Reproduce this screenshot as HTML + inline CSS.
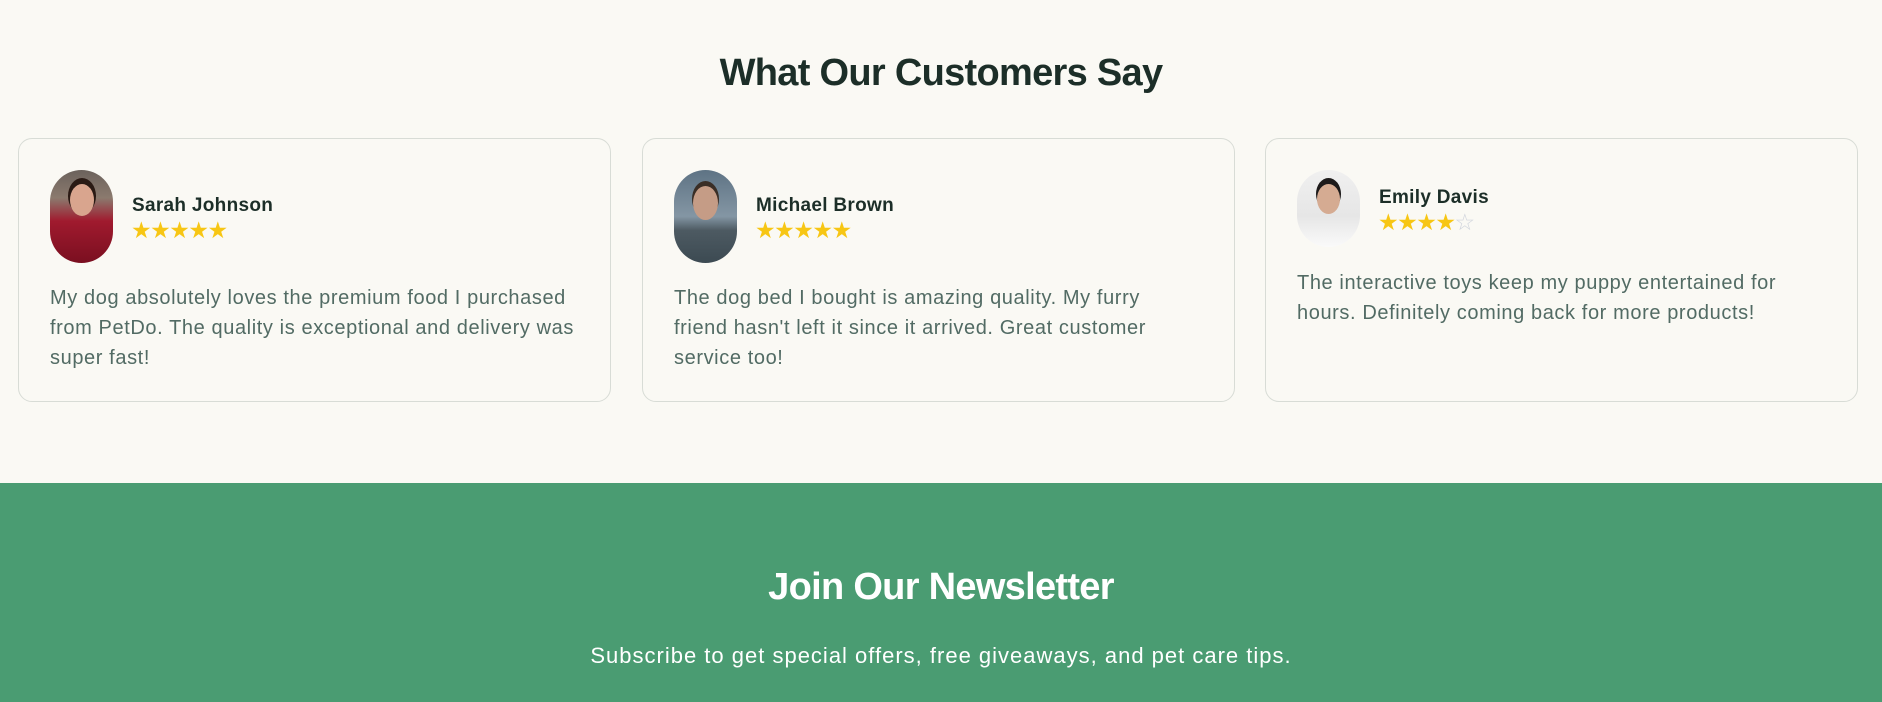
<!DOCTYPE html>
<html><head><meta charset="utf-8"><style>
*{box-sizing:border-box;margin:0;padding:0}
body{width:1882px;height:702px;overflow:hidden;background:#faf9f4;font-family:"Liberation Sans",sans-serif}
h2{position:absolute;left:0;width:1882px;text-align:center;font-weight:700;font-size:38px;letter-spacing:-0.7px}
.t{top:52px;color:#1c2e28}
.card{position:absolute;top:138px;height:264px;width:593px;border:1px solid #d8dcd6;border-radius:14px;background:#faf9f4}
.av{position:absolute;left:31px;top:31px;width:63px;height:93px;border-radius:32px;overflow:hidden}
.name{position:absolute;left:113px;font-size:19px;font-weight:700;color:#1c2e28;letter-spacing:0.3px}
.stars{position:absolute;left:112px;font-size:23px;color:#f7c614;letter-spacing:-1.5px;line-height:1}
.stars span{color:#d0d4dc}
.txt{position:absolute;left:31px;width:560px;font-size:20px;line-height:30px;color:#526b64;letter-spacing:0.6px;white-space:nowrap}
.green{position:absolute;top:483px;left:0;width:1882px;height:219px;background:#4a9c72}
.g2{top:83px;color:#fff}
.sub{position:absolute;top:160px;width:100%;text-align:center;color:#fff;font-size:22px;letter-spacing:1px}
</style></head><body>
<h2 class="t">What Our Customers Say</h2>

<div class="card" style="left:18px">
 <div class="av" style="background:linear-gradient(#6b625c 0,#8b7a6e 30%,#a01a2e 55%,#7a0f20 100%)">
  <div style="position:absolute;left:20px;top:14px;width:24px;height:32px;border-radius:50%;background:#d9a58e;box-shadow:0 -4px 0 2px #2a1a14"></div></div>
 <div class="name" style="top:56px">Sarah Johnson</div>
 <div class="stars" style="top:80px">★★★★★</div>
 <div class="txt" style="top:144px">My dog absolutely loves the premium food I purchased<br>from PetDo. The quality is exceptional and delivery was<br>super fast!</div>
</div>

<div class="card" style="left:642px">
 <div class="av" style="background:linear-gradient(#5e7384,#8496a4 50%,#4d5a62 65%,#3c4a52)">
  <div style="position:absolute;left:19px;top:16px;width:25px;height:34px;border-radius:50%;background:#c59c86;box-shadow:0 -4px 0 1px #3a2e26"></div></div>
 <div class="name" style="top:56px">Michael Brown</div>
 <div class="stars" style="top:80px">★★★★★</div>
 <div class="txt" style="top:144px">The dog bed I bought is amazing quality. My furry<br>friend hasn't left it since it arrived. Great customer<br>service too!</div>
</div>

<div class="card" style="left:1265px">
 <div class="av" style="height:77px;background:linear-gradient(#f0f0f0,#e6e6e6 60%,#fafafa)">
  <div style="position:absolute;left:20px;top:14px;width:23px;height:30px;border-radius:50%;background:#d5ab92;box-shadow:0 -5px 0 1px #1d1a1a"></div></div>
 <div class="name" style="top:48px">Emily Davis</div>
 <div class="stars" style="top:72px">★★★★<span>☆</span></div>
 <div class="txt" style="top:129px">The interactive toys keep my puppy entertained for<br>hours. Definitely coming back for more products!</div>
</div>

<div class="green">
 <h2 class="g2">Join Our Newsletter</h2>
 <div class="sub">Subscribe to get special offers, free giveaways, and pet care tips.</div>
</div>
</body></html>
